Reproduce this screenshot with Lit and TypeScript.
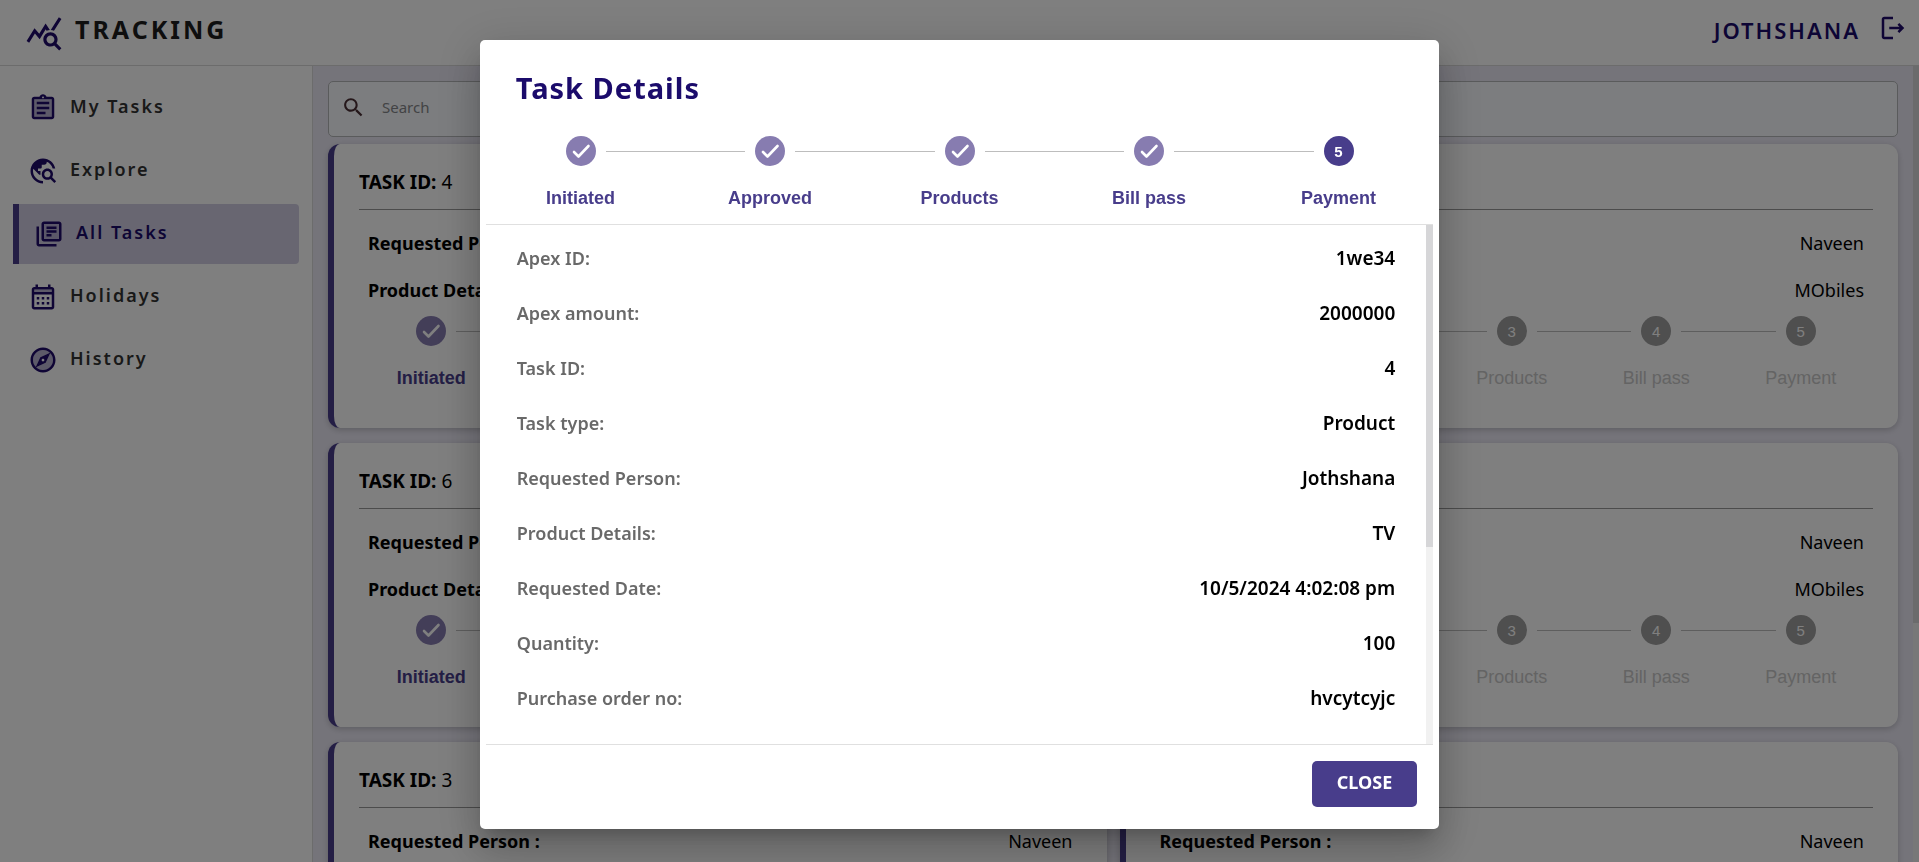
import { LitElement, html, css, svg, nothing } from "lit";
import { customElement, property } from "lit/decorators.js";

const STEPS = ["Initiated", "Approved", "Products", "Bill pass", "Payment"];

const DETAILS: [string, string][] = [
  ["Apex ID:", "1we34"],
  ["Apex amount:", "2000000"],
  ["Task ID:", "4"],
  ["Task type:", "Product"],
  ["Requested Person:", "Jothshana"],
  ["Product Details:", "TV"],
  ["Requested Date:", "10/5/2024 4:02:08 pm"],
  ["Quantity:", "100"],
  ["Purchase order no:", "hvcytcyjc"],
];

const TASKS = [
  { id: 4, done: 1 },
  { id: 5, done: 1 },
  { id: 6, done: 1 },
  { id: 7, done: 1 },
  { id: 3, done: 1 },
  { id: 2, done: 1 },
];

const ICONS = {
  tracking: svg`<path d="M19.88 18.47c.44-.7.7-1.51.7-2.39 0-2.49-2.01-4.5-4.5-4.5s-4.5 2.01-4.5 4.5 2.01 4.5 4.49 4.5c.88 0 1.7-.26 2.39-.7L21.58 23 23 21.58l-3.12-3.11zm-3.8.11c-1.38 0-2.5-1.12-2.5-2.5s1.12-2.5 2.5-2.5 2.5 1.12 2.5 2.5-1.12 2.5-2.5 2.5zm-.36-8.5c-.74.02-1.45.18-2.1.45l-.55-.83-3.8 6.18-3.01-3.52-3.63 5.81L1 17l5-8 3 3.5L13 6l2.72 4.08zm2.59.5c-.64-.28-1.33-.45-2.05-.49L21.38 2 23 3.18l-4.69 7.4z"/>`,
  clipboard: svg`<path opacity=".3" d="M5 5h14v14H5z"/><path d="M7 15h7v2H7zm0-4h10v2H7zm0-4h10v2H7zm12-4h-4.18C14.4 1.84 13.3 1 12 1s-2.4.84-2.82 2H5c-1.1 0-2 .9-2 2v14c0 1.1.9 2 2 2h14c1.1 0 2-.9 2-2V5c0-1.1-.9-2-2-2zm-7-.25c.41 0 .75.34.75.75s-.34.75-.75.75-.75-.34-.75-.75.34-.75.75-.75zM19 19H5V5h14v14z"/>`,
  explore: svg`<path d="M19.3 16.9c.4-.7.7-1.5.7-2.4 0-2.5-2-4.5-4.5-4.5S11 12 11 14.5s2 4.5 4.5 4.5c.9 0 1.7-.3 2.4-.7l3.2 3.2 1.4-1.4-3.2-3.2zm-3.8.1c-1.4 0-2.5-1.1-2.5-2.5s1.1-2.5 2.5-2.5 2.5 1.1 2.5 2.5-1.1 2.5-2.5 2.5zM12 20v2C6.48 22 2 17.52 2 12S6.48 2 12 2c4.84 0 8.87 3.44 9.8 8h-2.07c-.64-2.46-2.4-4.47-4.73-5.41V5c0 1.1-.9 2-2 2h-2v2c0 .55-.45 1-1 1H8v2h2v3H9l-4.79-4.79C4.08 10.79 4 11.38 4 12c0 4.41 3.59 8 8 8z"/>`,
  library: svg`<path opacity=".15" d="M8 4h12v12H8z"/><path d="M4 6H2v14c0 1.1.9 2 2 2h14v-2H4V6zm16-4H8c-1.1 0-2 .9-2 2v12c0 1.1.9 2 2 2h12c1.1 0 2-.9 2-2V4c0-1.1-.9-2-2-2zm0 14H8V4h12v12zM10 9h8v2h-8zm0 3h4v2h-4zm0-6h8v2h-8z"/>`,
  calendar: svg`<path opacity=".3" d="M5 6h14v2H5z"/><path d="M19 4h-1V2h-2v2H8V2H6v2H5c-1.11 0-1.99.9-1.99 2L3 20c0 1.1.89 2 2 2h14c1.1 0 2-.9 2-2V6c0-1.1-.9-2-2-2zm0 16H5V10h14v10zm0-12H5V6h14v2zM9 14H7v-2h2v2zm4 0h-2v-2h2v2zm4 0h-2v-2h2v2zm-8 4H7v-2h2v2zm4 0h-2v-2h2v2zm4 0h-2v-2h2v2z"/>`,
  compass: svg`<path opacity=".3" d="M12 4c-4.41 0-8 3.59-8 8s3.59 8 8 8 8-3.59 8-8-3.59-8-8-8zm2.19 10.19L6 18l3.81-8.19L18 6l-3.81 8.19z"/><path d="M12 2C6.48 2 2 6.48 2 12s4.48 10 10 10 10-4.48 10-10S17.52 2 12 2zm0 18c-4.41 0-8-3.59-8-8s3.59-8 8-8 8 3.59 8 8-3.59 8-8 8zM6 18l8.19-3.81L18 6 9.81 9.81 6 18zm6-7.1c.61 0 1.1.49 1.1 1.1s-.49 1.1-1.1 1.1-1.1-.49-1.1-1.1.49-1.1 1.1-1.1z"/>`,
  search: svg`<path d="M15.5 14h-.79l-.28-.27C15.41 12.59 16 11.11 16 9.5 16 5.91 13.09 3 9.5 3S3 5.91 3 9.5 5.91 16 9.5 16c1.61 0 3.09-.59 4.23-1.57l.27.28v.79l5 4.99L20.49 19l-4.99-5zm-6 0C7.01 14 5 11.99 5 9.5S7.01 5 9.5 5 14 7.01 14 9.5 11.99 14 9.5 14z"/>`,
  logout: svg`<path d="m17 8-1.41 1.41L17.17 11H9v2h8.17l-1.58 1.58L17 16l4-4-4-4zM5 5h7V3H5c-1.1 0-2 .9-2 2v14c0 1.1.9 2 2 2h7v-2H5V5z"/>`,
};

const icon = (name: keyof typeof ICONS, cls = "icon") =>
  html`<svg class=${cls} viewBox="0 0 24 24" aria-hidden="true">${ICONS[name]}</svg>`;

const scrollbarStyles = css`
  .scrollbar {
    flex: none;
    width: 6px;
    background: #f1f1f1;
  }
  .thumb {
    background: #d6d6d8;
  }
`;

const scrollbar = (percent: number) =>
  html`<div class="scrollbar" aria-hidden="true">
    <div class="thumb" style="height:${percent}%"></div>
  </div>`;

@customElement("task-stepper")
class TaskStepper extends LitElement {
  @property({ type: Number }) done = 0;
  @property({ type: Number }) active = -1;

  static styles = css`
    :host {
      display: block;
      font-family: "Liberation Sans", Arial, sans-serif;
    }
    .steps {
      display: flex;
      margin: 0;
      padding: 0;
      list-style: none;
    }
    .step {
      flex: 1;
      display: grid;
      grid-template-columns: 1fr 30px 1fr;
      column-gap: 10px;
      row-gap: 16px;
      align-items: center;
    }
    .line {
      height: 1px;
      background: #bdbdbd;
    }
    .line.none {
      background: none;
    }
    .dot {
      width: 30px;
      height: 30px;
      border-radius: 50%;
      background: #9e9e9e;
      color: #fff;
      display: flex;
      align-items: center;
      justify-content: center;
      font-size: 15px;
    }
    .label {
      grid-column: 1 / -1;
      text-align: center;
      font-size: 18px;
      line-height: 32px;
      color: #c8c8c8;
    }
    .complete .dot {
      background: #877cb0;
    }
    .current .dot {
      background: #483d8b;
      font-weight: 700;
    }
    .complete .label,
    .current .label {
      color: #483d8b;
      font-weight: 700;
    }
    .check {
      width: 24px;
      height: 24px;
      fill: none;
      stroke: #fff;
      stroke-width: 2.6;
      stroke-linecap: round;
      stroke-linejoin: round;
    }
  `;

  render() {
    return html`<ol class="steps">
      ${STEPS.map((name, i) => {
        const complete = i < this.done;
        const state = complete ? "complete" : i === this.active ? "current" : "";
        return html`<li class="step ${state}">
          <span class="line ${i === 0 ? "none" : ""}"></span>
          <span class="dot"
            >${complete
              ? html`<svg class="check" viewBox="0 0 24 24"><path d="M5 13 9.500 17.500 19.500 7" /></svg>`
              : i + 1}</span
          >
          <span class="line ${i === STEPS.length - 1 ? "none" : ""}"></span>
          <span class="label">${name}</span>
        </li>`;
      })}
    </ol>`;
  }
}

@customElement("task-card")
class TaskCard extends LitElement {
  @property({ type: Number }) taskId = 0;
  @property({ type: Number }) done = 0;

  static styles = css`
    :host {
      display: block;
      box-sizing: border-box;
      padding: 24px 25px 34px;
      background: #fff;
      border-left: 6px solid #483d8b;
      border-radius: 12px;
      box-shadow: 0 2px 6px rgba(0, 0, 0, 0.2);
      color: #000;
      font-size: 18px;
    }
    .title {
      margin: 0;
      padding-bottom: 13px;
      border-bottom: 1px solid #999;
      font-size: 19px;
      line-height: 28px;
      font-weight: 700;
    }
    .id {
      font-weight: 400;
    }
    .rows {
      margin: 0;
      padding: 10px 9px 2px;
    }
    .row {
      display: flex;
      justify-content: space-between;
      line-height: 47px;
    }
    .key {
      font-weight: 700;
    }
    .value {
      margin: 0;
    }
  `;

  render() {
    return html`<h2 class="title">TASK ID: <span class="id">${this.taskId}</span></h2>
      <dl class="rows">
        <div class="row"><dt class="key">Requested Person :</dt><dd class="value">Naveen</dd></div>
        <div class="row"><dt class="key">Product Details :</dt><dd class="value">MObiles</dd></div>
      </dl>
      <task-stepper .done=${this.done}></task-stepper>`;
  }
}

@customElement("task-dialog")
class TaskDialog extends LitElement {
  static styles = [
    scrollbarStyles,
    css`
      :host {
        position: fixed;
        inset: 0;
        padding-top: 7px;
        display: flex;
        align-items: center;
        justify-content: center;
        background: rgba(0, 0, 0, 0.5);
      }
      .paper {
        width: 50%;
        box-sizing: border-box;
        padding: 0 6px;
        display: flex;
        flex-direction: column;
        background: #fff;
        border-radius: 5px;
        box-shadow: 0 11px 15px -7px rgba(0, 0, 0, 0.2), 0 24px 38px 3px rgba(0, 0, 0, 0.14),
          0 9px 46px 8px rgba(0, 0, 0, 0.12);
      }
      .title {
        margin: 0;
        padding: 28px 30px;
        font-size: 29px;
        line-height: 40px;
        font-weight: 700;
        letter-spacing: 1px;
        color: #1b0b6b;
      }
      .stepper {
        padding-bottom: 10px;
      }
      .body {
        display: flex;
        border-top: 1px solid #e0e0e0;
        border-bottom: 1px solid #e0e0e0;
      }
      .details {
        flex: 1;
        margin: 0;
        padding: 15px 31px 9px;
      }
      .scrollbar {
        width: 7px;
      }
      .row {
        display: flex;
        justify-content: space-between;
        padding-bottom: 19px;
        line-height: 36px;
        font-weight: 600;
      }
      .key {
        font-size: 18px;
        color: #696969;
      }
      .value {
        margin: 0;
        font-size: 19px;
        color: #000;
      }
      .actions {
        display: flex;
        justify-content: flex-end;
        padding: 16px 16px 22px;
      }
      .close {
        height: 46px;
        padding: 0 25px 5px;
        border: 0;
        border-radius: 5px;
        background: #483d8b;
        color: #fff;
        font: 700 18px "Noto Sans", sans-serif;
      }
    `,
  ];

  render() {
    return html`<section class="paper" role="dialog" aria-modal="true" aria-labelledby="dialog-title">
      <h2 class="title" id="dialog-title">Task Details</h2>
      <task-stepper class="stepper" .done=${4} .active=${4}></task-stepper>
      <div class="body">
        <dl class="details">
          ${DETAILS.map(
            ([key, value]) =>
              html`<div class="row"><dt class="key">${key}</dt><dd class="value">${value}</dd></div>`
          )}
        </dl>
        ${scrollbar(62)}
      </div>
      <div class="actions"><button class="close" type="button">CLOSE</button></div>
    </section>`;
  }
}

@customElement("app-root")
class AppRoot extends LitElement {
  static styles = [
    scrollbarStyles,
    css`
      :host {
        display: flex;
        flex-direction: column;
        height: 100vh;
        overflow: hidden;
        background: #fff;
        font-family: "Noto Sans", sans-serif;
      }
      .icon {
        width: 30px;
        height: 30px;
        flex: none;
        fill: #1f0a6b;
      }
      .header {
        flex: none;
        height: 65px;
        display: flex;
        align-items: center;
        justify-content: space-between;
        padding: 0 11px 0 25px;
        border-bottom: 1px solid #d8d8d8;
      }
      .brand {
        display: flex;
        align-items: center;
        gap: 12px;
      }
      .logo {
        width: 38px;
        height: 38px;
        fill: #1f0a6b;
      }
      .name {
        margin: 0;
        padding-bottom: 8px;
        font-size: 25px;
        line-height: 32px;
        font-weight: 700;
        letter-spacing: 3px;
        color: #1c1c1c;
      }
      .account {
        display: flex;
        align-items: center;
        gap: 18px;
        padding-bottom: 9px;
        font-size: 22px;
        line-height: 30px;
        font-weight: 600;
        letter-spacing: 2px;
        color: #1b0b6b;
      }
      .user {
        padding-top: 4px;
      }
      .logout {
        display: flex;
        padding: 0;
        border: 0;
        background: none;
      }
      .layout {
        flex: 1;
        min-height: 0;
        display: flex;
      }
      .sidebar {
        flex: none;
        width: 313px;
        box-sizing: border-box;
        padding: 12px 13px;
        border-right: 1px solid #d8d8d8;
        display: flex;
        flex-direction: column;
        gap: 3px;
      }
      .link {
        height: 60px;
        box-sizing: border-box;
        display: flex;
        align-items: center;
        gap: 12px;
        padding: 0 15px;
        border-radius: 0 4px 4px 0;
        font-size: 18px;
        font-weight: 600;
        letter-spacing: 2px;
        color: #333;
        text-decoration: none;
      }
      .text {
        padding-bottom: 5px;
      }
      .link.selected {
        border-left: 6px solid #483d8b;
        background: #d1cde2;
        color: #1b0b6b;
      }
      .content {
        flex: 1;
        min-width: 0;
        overflow: hidden;
        padding: 15px;
        background: #ebe9f5;
      }
      .search {
        height: 56px;
        box-sizing: border-box;
        display: flex;
        align-items: center;
        gap: 14px;
        padding: 0 12px 4px;
        margin-bottom: 7px;
        border: 1px solid #b4b6b8;
        border-radius: 5px;
        background: #f8fafe;
      }
      .glass {
        width: 25px;
        height: 25px;
        flex: none;
        fill: #4a2f35;
      }
      .field {
        flex: 1;
        border: 0;
        outline: 0;
        background: none;
        font: 400 15px "Noto Sans", sans-serif;
      }
      .field::placeholder {
        color: #85878a;
      }
      .cards {
        display: grid;
        grid-template-columns: 1fr 1fr;
        gap: 15px 13px;
      }
    `,
  ];

  render() {
    const link = (name: keyof typeof ICONS, text: string, selected = false) =>
      html`<a
        class="link ${selected ? "selected" : ""}"
        href="#"
        aria-current=${selected ? "page" : nothing}
        >${icon(name)}<span class="text">${text}</span></a
      >`;
    return html`<header class="header">
        <div class="brand">${icon("tracking", "logo")}<h1 class="name">TRACKING</h1></div>
        <div class="account">
          <span class="user">JOTHSHANA</span>
          <button class="logout" type="button" aria-label="Log out">${icon("logout")}</button>
        </div>
      </header>
      <div class="layout">
        <nav class="sidebar">
          ${link("clipboard", "My Tasks")} ${link("explore", "Explore")}
          ${link("library", "All Tasks", true)} ${link("calendar", "Holidays")}
          ${link("compass", "History")}
        </nav>
        <main class="content">
          <div class="search">
            ${icon("search", "glass")}
            <input class="field" type="search" placeholder="Search" aria-label="Search" />
          </div>
          <div class="cards">
            ${TASKS.map((t) => html`<task-card .taskId=${t.id} .done=${t.done}></task-card>`)}
          </div>
        </main>
        ${scrollbar(70)}
      </div>
      <task-dialog></task-dialog>`;
  }
}
